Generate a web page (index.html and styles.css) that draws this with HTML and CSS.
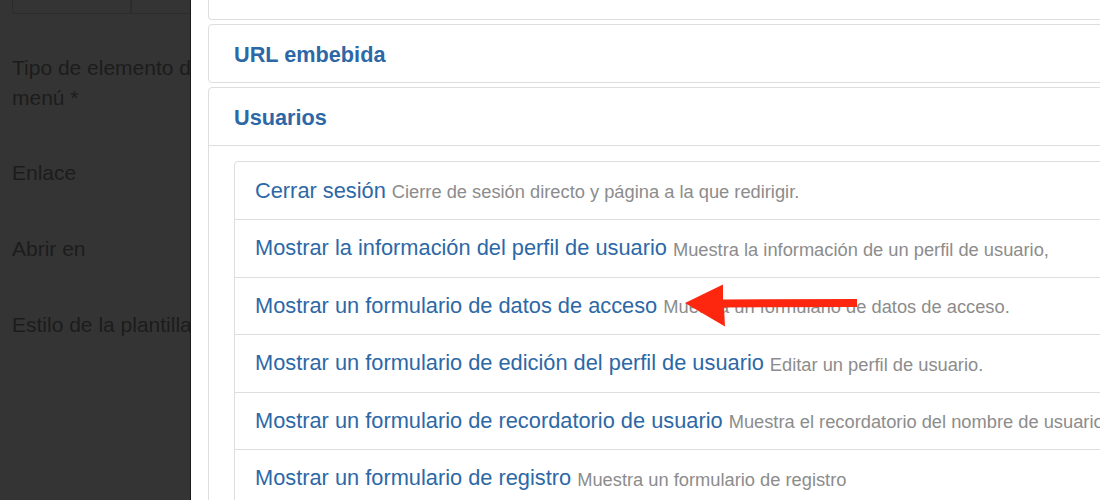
FILE: index.html
```html
<!DOCTYPE html>
<html lang="es">
<head>
    <meta charset="UTF-8">
    <title>Tipo de elemento de menú</title>
    <link rel="stylesheet" href="styles.css">
</head>
<body>
    <div class="page">
        <!-- Form behind the modal, dimmed -->
        <div class="backdrop">
            <div class="top-field">
                <span class="field-input"></span>
                <span class="field-btn"></span>
            </div>
            <div class="form-label label-type">Tipo de elemento de menú *</div>
            <div class="form-label">Enlace</div>
            <div class="form-label">Abrir en</div>
            <div class="form-label">Estilo de la plantilla</div>
        </div>

        <div class="modal">
            <div class="modal-inner">
                <div class="panel panel-cut"></div>
                <div class="panel">
                    <div class="panel-heading">URL embebida</div>
                </div>
                <div class="panel">
                    <div class="panel-heading">Usuarios</div>
                    <div class="panel-body">
                        <ul class="item-list">
                            <li><a href="#">Cerrar sesión</a> <small>Cierre de sesión directo y página a la que redirigir.</small></li>
                            <li><a href="#">Mostrar la información del perfil de usuario</a> <small>Muestra la información de un perfil de usuario,</small></li>
                            <li><a href="#">Mostrar un formulario de datos de acceso</a> <small>Muestra un formulario de datos de acceso.</small></li>
                            <li><a href="#">Mostrar un formulario de edición del perfil de usuario</a> <small>Editar un perfil de usuario.</small></li>
                            <li><a href="#">Mostrar un formulario de recordatorio de usuario</a> <small>Muestra el recordatorio del nombre de usuario.</small></li>
                            <li><a href="#">Mostrar un formulario de registro</a> <small>Muestra un formulario de registro</small></li>
                        </ul>
                    </div>
                </div>
            </div>
        </div>

        <!-- annotation arrow -->
        <svg class="arrow" width="200" height="60" viewBox="0 0 200 60">
            <polygon points="1,23 39,4.5 39,19.5 173,19 173,27 40,27.5 41,46.5" fill="#fd2710"/>
        </svg>
    </div>
</body>
</html>
```

FILE: styles.css
```css
html, body {
    margin: 0;
    padding: 0;
    height: 100%;
    overflow: hidden;
}

body {
    font-family: "Liberation Sans", Arial, Helvetica, sans-serif;
    font-size: 21px;
}

.page {
    position: relative;
    display: flex;
    height: 500px;
}

/* Dimmed form on the left */
.backdrop {
    width: 191px;
    flex-shrink: 0;
    background: #343434;
    color: #1c1c1c;
    padding-left: 12px;
    box-sizing: border-box;
    border-right: 1px solid #1a1a1a;
    overflow: hidden;
    white-space: nowrap;
}

.top-field {
    display: flex;
    height: 14px;
    margin-bottom: 39px;
}

.field-input {
    width: 117px;
    border: 1px solid #2c2c2c;
    border-top: none;
    border-radius: 0 0 3px 3px;
}

.field-btn {
    flex: 1;
    border: 1px solid #2c2c2c;
    border-top: none;
    border-right: none;
}

.form-label {
    line-height: 30px;
    margin-bottom: 46px;
}

.label-type {
    white-space: normal;
    width: 230px;
    margin-bottom: 45px;
}

/* Modal */
.modal {
    flex: 1;
    background: #fff;
    overflow: hidden;
}

.modal-inner {
    width: 940px;
    padding-left: 17px;
}

.panel {
    border: 1px solid #dedede;
    border-radius: 4px;
    margin-bottom: 4px;
}

.panel-cut {
    height: 19px;
    border-top: none;
    border-radius: 0 0 4px 4px;
}

.panel-heading {
    height: 57px;
    line-height: 59px;
    padding-left: 25px;
    font-size: 21.7px;
    font-weight: bold;
    color: #2d68a6;
}

.panel-body {
    border-top: 1px solid #dedede;
    padding: 15px 0 0 25px;
}

.item-list {
    list-style: none;
    margin: 0;
    padding: 0;
    border: 1px solid #dedede;
    border-radius: 4px;
    white-space: nowrap;
}

.item-list li {
    height: 56.5px;
    display: flex;
    align-items: center;
    padding-left: 20px;
    border-top: 1px solid #dedede;
}

.item-list li:first-child {
    border-top: none;
    height: 57px;
}

.item-list a {
    color: #2d68a6;
    font-size: 21.8px;
    text-decoration: none;
}

.item-list small {
    color: #8c8c8c;
    font-size: 18.3px;
    margin-left: 6px;
    padding-top: 3px;
}

/* Annotation arrow laid over the list */
.arrow {
    position: absolute;
    left: 684px;
    top: 280px;
}
```
